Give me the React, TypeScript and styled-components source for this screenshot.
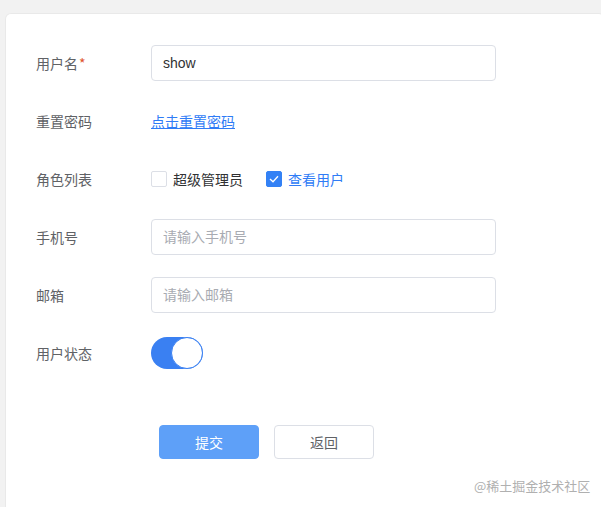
import React from "react";
import styled, { createGlobalStyle } from "styled-components";

const GlobalStyle = createGlobalStyle`
  html, body {
    margin: 0;
    padding: 0;
    background: #f2f2f2;
    overflow: hidden;
  }
  body {
    font-family: "Noto Sans CJK SC", "Noto Sans", sans-serif;
  }
`;

const Page = styled.div`
  display: flex;
  padding: 13px 0 0 5px;
  height: 507px;
  box-sizing: border-box;
`;

// card runs off the bottom of the frame, so no bottom border / radius
const Card = styled.div`
  position: relative;
  width: 600px;
  flex-shrink: 0;
  background: #fff;
  border: 1px solid #e9e9e9;
  border-bottom: none;
  border-radius: 6px 6px 0 0;
  padding: 31px 0 0 30px;
  box-sizing: border-box;
`;

const Form = styled.div`
  display: flex;
  flex-direction: column;
`;

const Row = styled.div`
  display: flex;
  align-items: center;
  height: 36px;
  margin-bottom: 22px;
`;

const Label = styled.label`
  width: 115px;
  font-size: 14px;
  color: #606266;
`;

const Required = styled.span`
  color: #e0542d;
  margin-left: 1px;
`;

const Input = styled.input`
  width: 345px;
  height: 36px;
  box-sizing: border-box;
  border: 1px solid #dcdfe6;
  border-radius: 4px;
  padding: 0 11px;
  font-size: 14px;
  color: #303133;
  font-family: "Liberation Sans", "Noto Sans CJK SC", sans-serif;
  outline: none;
  &::placeholder {
    color: #a8abb2;
    font-family: "Noto Sans CJK SC", sans-serif;
  }
`;

const Link = styled.a`
  font-size: 14px;
  color: #2f7cf6;
  text-decoration: underline;
  cursor: pointer;
`;

const CheckGroup = styled.div`
  display: flex;
  align-items: center;
  gap: 23px;
`;

const CheckItem = styled.label<{ $checked?: boolean }>`
  display: flex;
  align-items: center;
  gap: 6px;
  font-size: 14px;
  color: ${(p) => (p.$checked ? "#2f7cf6" : "#303133")};
`;

const Box = styled.span<{ $checked?: boolean }>`
  width: 16px;
  height: 16px;
  box-sizing: border-box;
  border-radius: 2px;
  border: 1px solid ${(p) => (p.$checked ? "#3381f5" : "#dcdfe6")};
  background: ${(p) => (p.$checked ? "#3381f5" : "#fff")};
  display: flex;
  align-items: center;
  justify-content: center;
`;

const Switch = styled.div<{ $on?: boolean }>`
  width: 52px;
  height: 32px;
  border-radius: 16px;
  background: ${(p) => (p.$on ? "#3a80f2" : "#dcdfe6")};
  display: flex;
  align-items: center;
  justify-content: ${(p) => (p.$on ? "flex-end" : "flex-start")};
  box-sizing: border-box;
`;

const Knob = styled.span`
  width: 32px;
  height: 32px;
  border-radius: 50%;
  background: #fff;
  border: 1px solid #3a80f2;
  box-sizing: border-box;
`;

const Actions = styled.div`
  display: flex;
  gap: 15px;
  margin: 32px 0 0 123px;
`;

const Button = styled.button<{ $primary?: boolean }>`
  width: 100px;
  height: 34px;
  border-radius: 4px;
  font-size: 14px;
  font-family: "Noto Sans CJK SC", sans-serif;
  border: 1px solid ${(p) => (p.$primary ? "#5ea0f8" : "#dcdfe6")};
  background: ${(p) => (p.$primary ? "#5ea0f8" : "#fff")};
  color: ${(p) => (p.$primary ? "#fff" : "#606266")};
  cursor: pointer;
`;

const Watermark = styled.div`
  position: absolute;
  left: 468px;
  top: 462px;
  font-size: 13px;
  color: #b0b0b0;
`;

const Check = () => (
  <svg width="10" height="8" viewBox="0 0 10 8">
    <path d="M1 4 L4 6.8 L9 1.2" fill="none" stroke="#fff" strokeWidth="1.3" />
  </svg>
);

export default function App() {
  return (
    <>
      <GlobalStyle />
      <Page>
        <Card>
          <Form>
            <Row>
              <Label>
                用户名<Required>*</Required>
              </Label>
              <Input defaultValue="show" />
            </Row>
            <Row>
              <Label>重置密码</Label>
              <Link>点击重置密码</Link>
            </Row>
            <Row>
              <Label>角色列表</Label>
              <CheckGroup>
                <CheckItem>
                  <Box />
                  超级管理员
                </CheckItem>
                <CheckItem $checked>
                  <Box $checked>
                    <Check />
                  </Box>
                  查看用户
                </CheckItem>
              </CheckGroup>
            </Row>
            <Row>
              <Label>手机号</Label>
              <Input placeholder="请输入手机号" />
            </Row>
            <Row>
              <Label>邮箱</Label>
              <Input placeholder="请输入邮箱" />
            </Row>
            <Row>
              <Label>用户状态</Label>
              <Switch $on>
                <Knob />
              </Switch>
            </Row>
            <Actions>
              <Button $primary>提交</Button>
              <Button>返回</Button>
            </Actions>
          </Form>
          <Watermark>@稀土掘金技术社区</Watermark>
        </Card>
      </Page>
    </>
  );
}
